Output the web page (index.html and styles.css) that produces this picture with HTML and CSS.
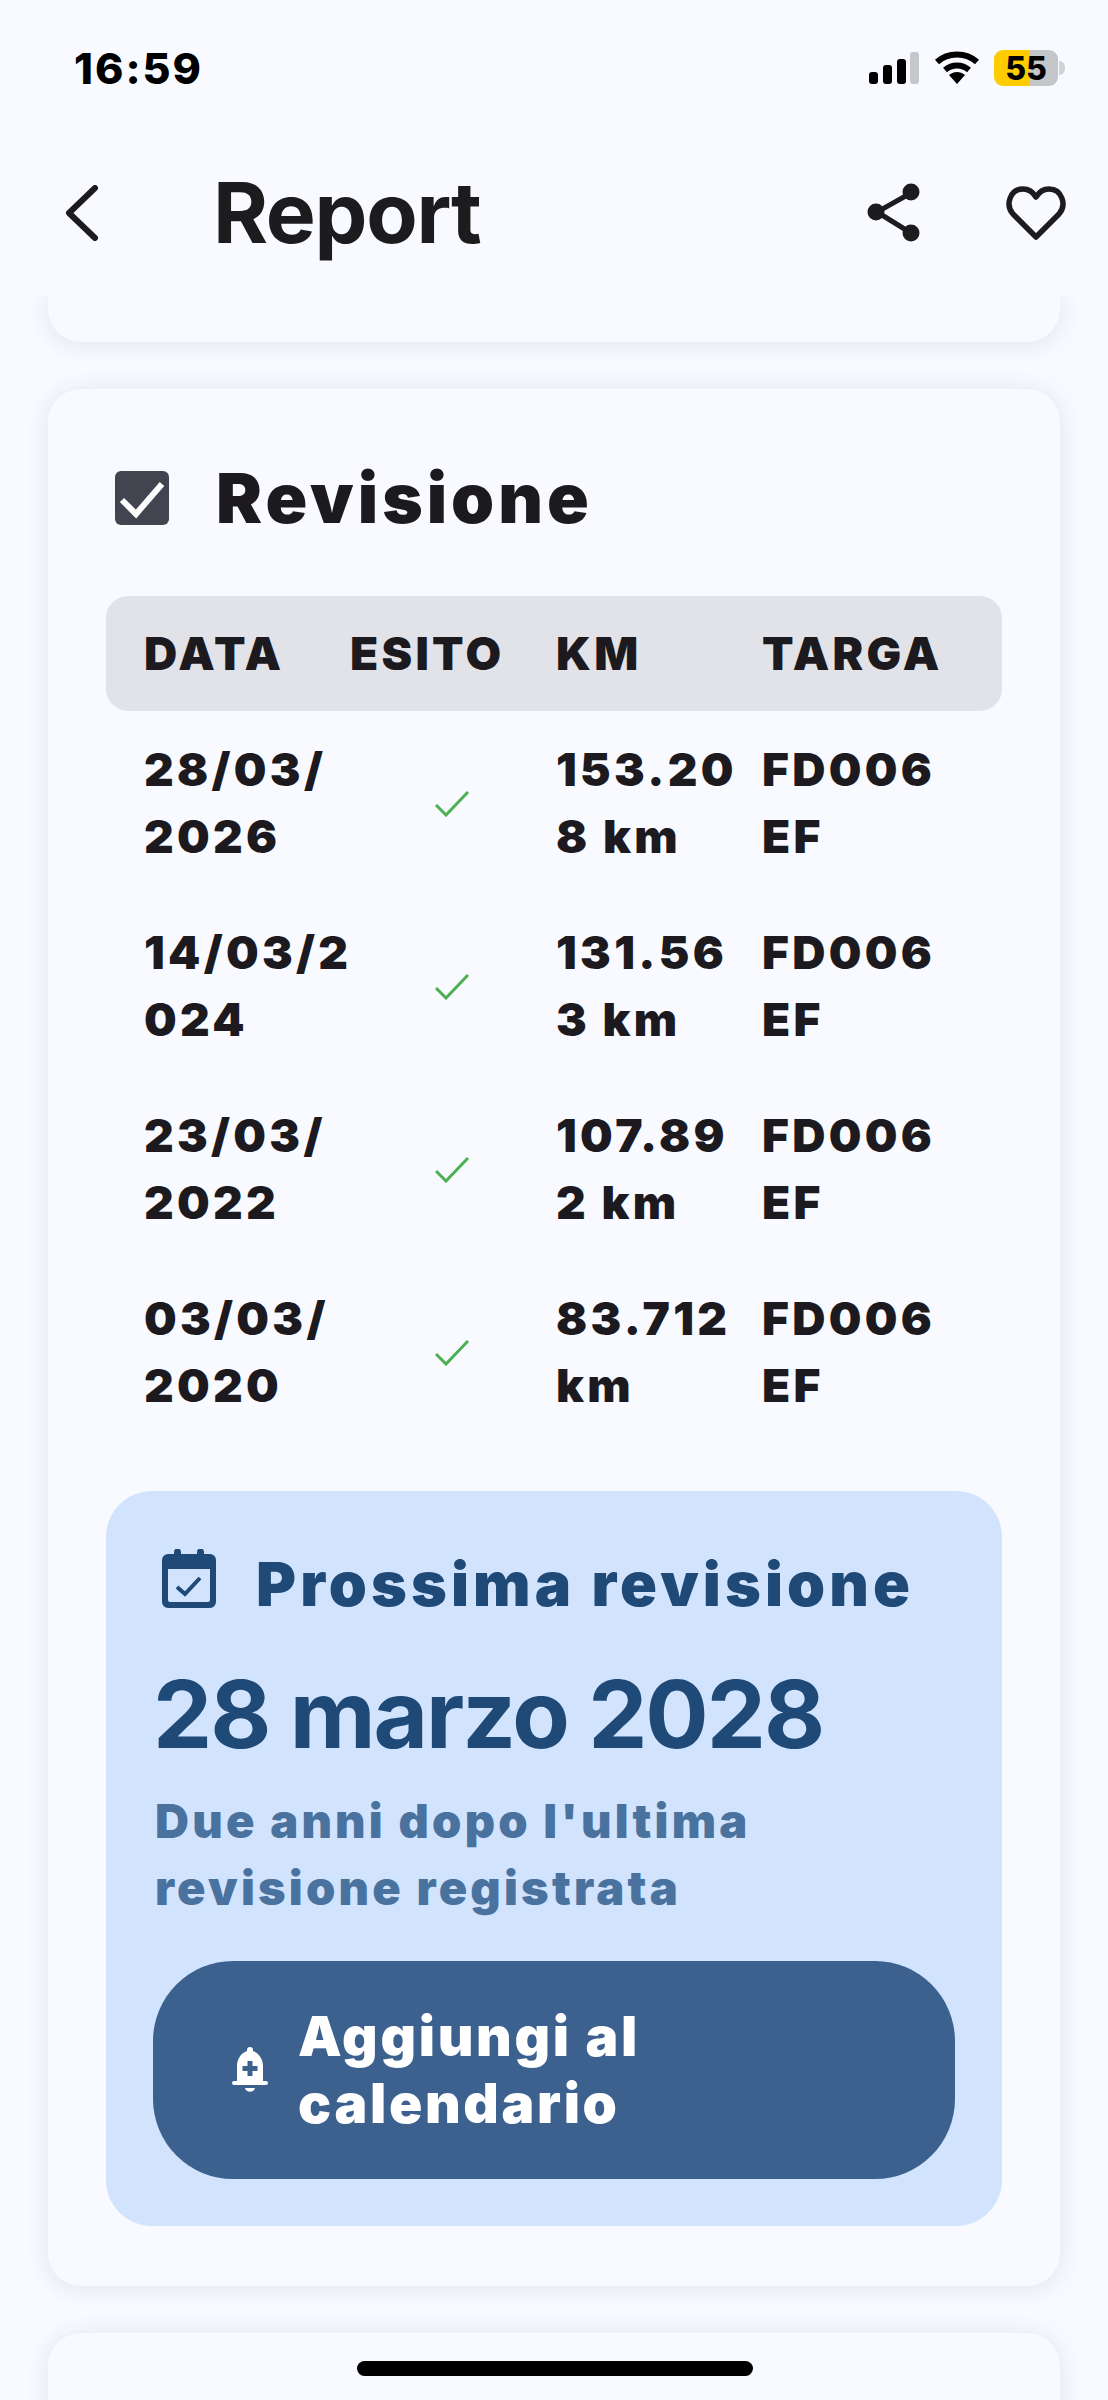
FILE: index.html
```html
<!DOCTYPE html>
<html lang="en">
<head>
    <meta charset="UTF-8">
    <meta name="viewport" content="width=device-width, initial-scale=1.0">
    <title>Report</title>
    <link rel="stylesheet" href="styles.css">
</head>
<body>
    <div class="top-area">
        <div class="status-bar">
            <span class="time">16:59</span>
            <div class="status-icons">
                <svg class="signal" width="50" height="32" viewBox="0 0 50 32">
                    <rect x="0" y="20" width="9" height="12" rx="3" fill="#000"/>
                    <rect x="14" y="13" width="9" height="19" rx="3" fill="#000"/>
                    <rect x="28" y="7" width="9" height="25" rx="3" fill="#000"/>
                    <rect x="41" y="0" width="9" height="32" rx="3" fill="#c6c7ca"/>
                </svg>
                <svg class="wifi" width="46" height="34" viewBox="0 0 46 34">
                    <path d="M3 11 C14 1 32 1 43 11" fill="none" stroke="#000" stroke-width="6"/>
                    <path d="M11 19 C18 13 28 13 35 19" fill="none" stroke="#000" stroke-width="6"/>
                    <path d="M15 24 C20 20 26 20 31 24 L23 33 Z" fill="#000"/>
                </svg>
                <div class="battery"><span>55</span></div>
                <div class="battery-cap"></div>
            </div>
        </div>
        <header class="nav">
            <svg class="back" width="34" height="56" viewBox="0 0 34 56">
                <path d="M30 3 L4 28 L30 53" fill="none" stroke="#1c1c1e" stroke-width="6" stroke-linecap="round" stroke-linejoin="round"/>
            </svg>
            <h1>Report</h1>
            <svg class="share" width="54" height="60" viewBox="0 0 54 60">
                <path d="M44 10 L10 29 L44 50" fill="none" stroke="#1c1c1e" stroke-width="5"/>
                <circle cx="44" cy="9" r="8.5" fill="#1c1c1e"/>
                <circle cx="9" cy="29" r="8.5" fill="#1c1c1e"/>
                <circle cx="44" cy="50" r="8.5" fill="#1c1c1e"/>
            </svg>
            <svg class="heart" width="60" height="56" viewBox="0 0 60 56">
                <path d="M30 52 L7 29 C-1 20 4 4 17 4 C23 4 27 7 30 12 C33 7 37 4 43 4 C56 4 61 20 53 29 Z" fill="none" stroke="#1c1c1e" stroke-width="5.5" stroke-linejoin="round"/>
            </svg>
        </header>
    </div>

    <main class="content">
        <div class="card card-prev"></div>

        <section class="card">
            <div class="card-title">
                <svg class="check-box" width="54" height="54" viewBox="0 0 54 54">
                    <rect width="54" height="54" rx="6" fill="#42444f"/>
                    <path d="M7 29 L21 43 L47 13" fill="none" stroke="#fff" stroke-width="6"/>
                </svg>
                <h2>Revisione</h2>
            </div>

            <div class="table-head">
                <span>DATA</span>
                <span>ESITO</span>
                <span>KM</span>
                <span>TARGA</span>
            </div>

            <div class="table-row">
                <span>28/03/<br>2026</span>
                <span class="result"><svg width="34" height="26" viewBox="0 0 34 26"><path d="M1 14 L11 24 L33 1" fill="none" stroke="#4caf50" stroke-width="3"/></svg></span>
                <span>153.20<br>8 km</span>
                <span>FD006<br>EF</span>
            </div>
            <div class="table-row">
                <span>14/03/2<br>024</span>
                <span class="result"><svg width="34" height="26" viewBox="0 0 34 26"><path d="M1 14 L11 24 L33 1" fill="none" stroke="#4caf50" stroke-width="3"/></svg></span>
                <span>131.56<br>3 km</span>
                <span>FD006<br>EF</span>
            </div>
            <div class="table-row">
                <span>23/03/<br>2022</span>
                <span class="result"><svg width="34" height="26" viewBox="0 0 34 26"><path d="M1 14 L11 24 L33 1" fill="none" stroke="#4caf50" stroke-width="3"/></svg></span>
                <span>107.89<br>2 km</span>
                <span>FD006<br>EF</span>
            </div>
            <div class="table-row">
                <span>03/03/<br>2020</span>
                <span class="result"><svg width="34" height="26" viewBox="0 0 34 26"><path d="M1 14 L11 24 L33 1" fill="none" stroke="#4caf50" stroke-width="3"/></svg></span>
                <span>83.712<br>km</span>
                <span>FD006<br>EF</span>
            </div>

            <div class="next-box">
                <div class="next-head">
                    <svg width="54" height="60" viewBox="0 0 54 60">
                        <path d="M12 3 a3.500 3.500 0 0 1 7 0 V5 H35 V3 a3.500 3.500 0 0 1 7 0 V5 H48 a6 6 0 0 1 6 6 V53 a6 6 0 0 1 -6 6 H6 a6 6 0 0 1 -6 -6 V11 a6 6 0 0 1 6 -6 H12 Z M6 20 V51 a2 2 0 0 0 2 2 H46 a2 2 0 0 0 2 -2 V20 Z" fill="#1f4a78" fill-rule="evenodd"/>
                        <path d="M15 38 L23 45 L38 29" fill="none" stroke="#1f4a78" stroke-width="4"/>
                    </svg>
                    <h3>Prossima revisione</h3>
                </div>
                <div class="next-date">28 marzo 2028</div>
                <p class="next-note">Due anni dopo l'ultima<br>revisione registrata</p>
                <button class="calendar-btn">
                    <svg width="36" height="46" viewBox="0 0 36 46">
                        <path d="M15 3 a3 3 0 0 1 6 0 V4 C27 6 31 12 31 19 V34 H34 a2 2 0 0 1 0 4 H2 a2 2 0 0 1 0 -4 H5 V19 C5 12 9 6 15 4 Z M15.500 14 V19 H10.500 V24 H15.500 V29 H20.500 V24 H25.500 V19 H20.500 V14 Z M13 41 H23 C22 46 14 46 13 41 Z" fill="#fff" fill-rule="evenodd"/>
                    </svg>
                    <span>Aggiungi al<br>calendario</span>
                </button>
            </div>
        </section>

        <div class="card card-next"></div>
    </main>

    <div class="home-bar"></div>
</body>
</html>
```

FILE: styles.css
```css
* {
    box-sizing: border-box;
}
body {
    font-family: Inter, 'Noto Sans', sans-serif;
    background: #f8faff;
    color: #1c1a1f;
    margin: 0;
    height: 2400px;
    overflow: hidden;
    display: flex;
    flex-direction: column;
}

/* status bar + nav */
.top-area {
    background: #f8faff;
    height: 296px;
    flex-shrink: 0;
    position: relative;
    z-index: 2;
}
.status-bar {
    display: flex;
    justify-content: space-between;
    align-items: center;
    padding: 50px 43px 0 74px;
    height: 86px;
}
.time {
    font-size: 43px;
    font-weight: 800;
    letter-spacing: 2px;
    color: #000;
    line-height: 36px;
}
.status-icons {
    display: flex;
    align-items: center;
}
.signal {
    margin-right: 15px;
}
.wifi {
    margin-right: 14px;
}
.battery {
    width: 64px;
    height: 36px;
    border-radius: 9px;
    background: linear-gradient(90deg, #ffcc00 55%, #c5c6c9 55%);
    display: flex;
    align-items: center;
    justify-content: center;
    font-size: 32px;
    font-weight: 800;
    color: #000;
}
.battery-cap {
    width: 6px;
    height: 14px;
    margin-left: 1px;
    background: #d2d3d6;
    border-radius: 0 6px 6px 0;
}
.nav {
    display: flex;
    align-items: center;
    padding: 82px 42px 0 65px;
}
.nav h1 {
    margin: 0 0 0 114px;
    font-size: 84px;
    font-weight: 700;
    line-height: 90px;
    letter-spacing: -1.3px;
    color: #1c1c1e;
    flex: 1;
}
.share {
    margin-right: 85px;
}

/* cards */
.content {
    padding: 0 48px;
    display: flex;
    flex-direction: column;
    gap: 47px;
}
.card {
    background: #f8faff;
    border-radius: 33px;
    box-shadow: 0 2px 24px rgba(40, 45, 70, 0.11);
    padding: 70px 58px 60px;
}
.card-prev {
    height: 46px;
    padding: 0;
    border-radius: 0 0 33px 33px;
}
.card-next {
    height: 200px;
    flex-shrink: 0;
}
.card-title {
    display: flex;
    align-items: center;
    height: 78px;
    margin-bottom: 59px;
    padding-left: 9px;
}
.card-title h2 {
    margin: 0 0 0 47px;
    font-size: 69px;
    font-weight: 900;
    line-height: 78px;
    letter-spacing: 4px;
}

/* revisions table */
.table-head,
.table-row {
    display: grid;
    grid-template-columns: repeat(4, 206px);
    padding: 0 38px;
    font-size: 46px;
    font-weight: 900;
    letter-spacing: 3.3px;
    line-height: 67px;
    white-space: nowrap;
}
.table-head {
    background: #e2e3e8;
    border-radius: 22px;
    height: 115px;
    align-items: center;
}
.table-row {
    height: 183px;
    align-items: center;
}
.table-row .result {
    display: flex;
    justify-content: center;
    padding: 2px 2px 0 0;
}

/* next revision box */
.next-box {
    margin-top: 48px;
    background: #d2e3fd;
    border-radius: 46px;
    padding: 47px;
}
.next-head {
    display: flex;
    align-items: center;
    height: 82px;
    padding-left: 9px;
}
.next-head h3 {
    margin: 10px 0 0 40px;
    font-size: 61px;
    font-weight: 900;
    letter-spacing: 4.1px;
    color: #1f4a78;
}
.next-date {
    margin-top: 38px;
    font-size: 94px;
    font-weight: 700;
    line-height: 112px;
    letter-spacing: -2px;
    color: #1f4a78;
}
.next-note {
    margin: 17px 0 0 2px;
    font-size: 47px;
    font-weight: 900;
    line-height: 67px;
    letter-spacing: 3.2px;
    color: #4a729f;
}
.calendar-btn {
    margin-top: 40px;
    width: 100%;
    height: 218px;
    border: none;
    border-radius: 80px;
    background: #3c618f;
    color: #fff;
    font-family: inherit;
    font-size: 55px;
    font-weight: 900;
    line-height: 67px;
    letter-spacing: 2.7px;
    text-align: left;
    display: flex;
    align-items: center;
    gap: 30px;
    padding: 0 100px 0 79px;
}
.calendar-btn svg {
    flex-shrink: 0;
}

.home-bar {
    position: absolute;
    left: 357px;
    top: 2361px;
    width: 396px;
    height: 15px;
    border-radius: 8px;
    background: #000;
    z-index: 3;
}
```
